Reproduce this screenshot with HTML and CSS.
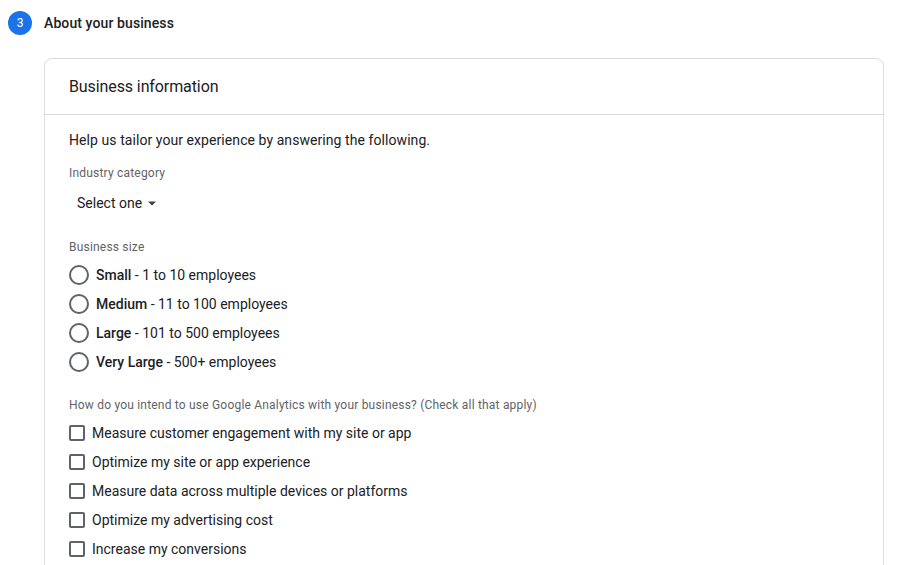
FILE: index.html
```html
<!DOCTYPE html>
<html lang="en">
  <head>
    <meta charset="UTF-8" />
    <title>About your business</title>
    <link rel="stylesheet" href="styles.css">
  </head>
  <body>
    <div class="step">
      <span class="step_num">3</span>
      <span class="step_title">About your business</span>
    </div>

    <section class="card">
      <div class="card_header">Business information</div>
      <div class="card_body">
        <p class="intro">Help us tailor your experience by answering the following.</p>

        <p class="field_label">Industry category</p>
        <button class="select">
          Select one
          <svg width="10" height="10" viewBox="0 0 10 10"><path d="M1 3.5 L5 7.5 L9 3.5 Z" fill="#3c4043"/></svg>
        </button>

        <p class="field_label size_label">Business size</p>
        <div class="options">
          <label class="radio_row"><span class="radio"></span><span><b>Small</b> - 1 to 10 employees</span></label>
          <label class="radio_row"><span class="radio"></span><span><b>Medium</b> - 11 to 100 employees</span></label>
          <label class="radio_row"><span class="radio"></span><span><b>Large</b> - 101 to 500 employees</span></label>
          <label class="radio_row"><span class="radio"></span><span><b>Very Large</b> - 500+ employees</span></label>
        </div>

        <p class="field_label use_label">How do you intend to use Google Analytics with your business? (Check all that apply)</p>
        <div class="options">
          <label class="check_row"><span class="checkbox"></span><span>Measure customer engagement with my site or app</span></label>
          <label class="check_row"><span class="checkbox"></span><span>Optimize my site or app experience</span></label>
          <label class="check_row"><span class="checkbox"></span><span>Measure data across multiple devices or platforms</span></label>
          <label class="check_row"><span class="checkbox"></span><span>Optimize my advertising cost</span></label>
          <label class="check_row"><span class="checkbox"></span><span>Increase my conversions</span></label>
        </div>
      </div>
    </section>
  </body>
</html>
```

FILE: styles.css
```css
/* variables */
:root {
  --textColor: #202124;
  --mutedColor: #5f6368;
  --lineColor: #dadce0;
  --blue: #1a73e8;
}

/* base */
*,
::before,
::after {
  box-sizing: border-box;
  margin: 0;
  padding: 0;
}
body {
  background-color: #fff;
  color: var(--textColor);
  font-family: Roboto, "Liberation Sans", Arial, sans-serif;
  font-size: 14px;
}

/* step heading */
.step {
  display: flex;
  align-items: center;
  gap: 12px;
  height: 46px;
  padding-left: 8px;
}
.step_num {
  display: flex;
  justify-content: center;
  align-items: center;
  width: 24px;
  height: 24px;
  border-radius: 50%;
  background-color: var(--blue);
  color: #fff;
  font-size: 12px;
}
.step_title {
  font-size: 14px;
  font-weight: 500;
  letter-spacing: 0.1px;
}

/* card */
.card {
  margin: 12px 16px 0 44px;
  border: 1px solid var(--lineColor);
  border-radius: 8px;
  height: 560px;
}
.card_header {
  display: flex;
  align-items: center;
  height: 56px;
  padding-left: 24px;
  border-bottom: 1px solid var(--lineColor);
  font-size: 16px;
  letter-spacing: -0.1px;
}
.card_body {
  padding: 15px 24px 0;
}
.intro {
  line-height: 20px;
  letter-spacing: 0.07px;
}
.field_label {
  margin-top: 15px;
  font-size: 12px;
  line-height: 16px;
  letter-spacing: 0.2px;
  color: var(--mutedColor);
}
.select {
  display: flex;
  align-items: center;
  gap: 5px;
  height: 36px;
  margin-top: 4px;
  padding: 0 8px;
  border: none;
  background: none;
  color: var(--textColor);
  font-family: inherit;
  font-size: 14px;
}
.size_label {
  margin-top: 18px;
}
.use_label {
  margin-top: 21px;
}

/* options */
.options {
  display: flex;
  flex-direction: column;
  margin-top: 5px;
}
.radio_row,
.check_row {
  display: flex;
  align-items: center;
  height: 29px;
}
.radio_row b {
  font-weight: 500;
}
.radio {
  width: 20px;
  height: 20px;
  margin-right: 7px;
  border: 2px solid var(--mutedColor);
  border-radius: 50%;
}
.checkbox {
  width: 16px;
  height: 16px;
  margin-right: 7px;
  border: 2px solid var(--mutedColor);
  border-radius: 2px;
}
```
